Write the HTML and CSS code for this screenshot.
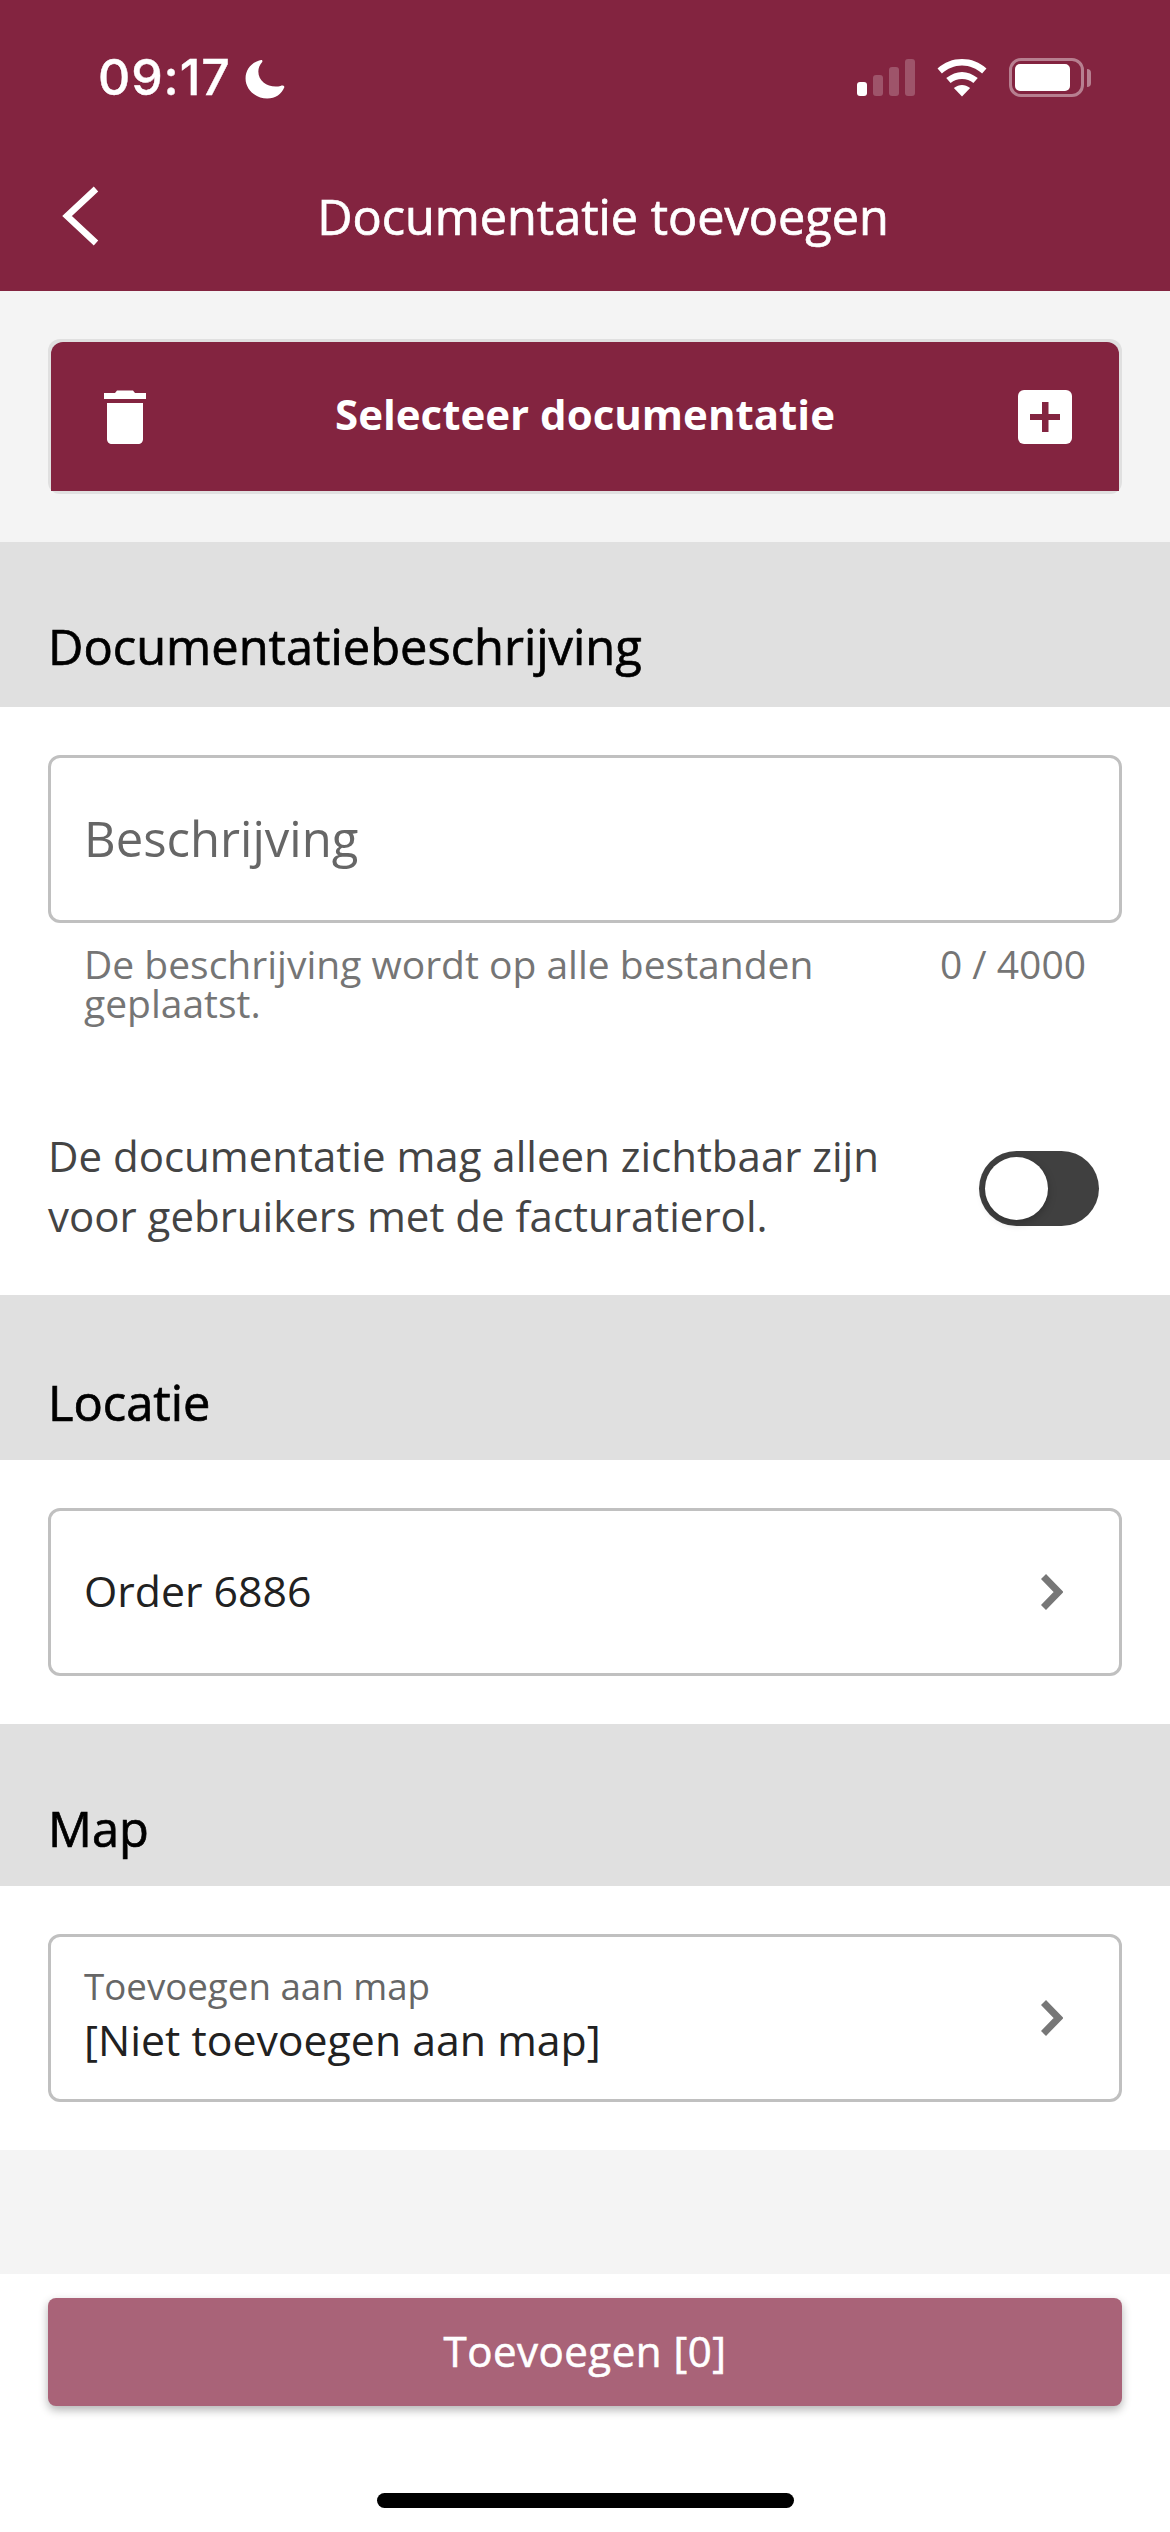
FILE: index.html
```html
<!DOCTYPE html>
<html lang="nl">
<head>
<meta charset="utf-8">
<title>Documentatie toevoegen</title>
<link rel="stylesheet" href="styles.css">
</head>
<body>
<div class="screen">
  <header class="appbar">
    <div class="status">
      <div class="status-left">
        <span class="clock">09:17</span>
        <svg class="moon" width="40" height="40" viewBox="0 0 36 40" preserveAspectRatio="none"><path fill="#fff" d="M14.500 1C6 3 0.500 10.500 0.500 19.500C0.500 30.500 9.500 39.500 20 39.500C27.500 39.500 33 35 35.500 28C34.800 26.500 33.500 26.300 32 27C22 29.500 12 23 12 12.500C12 8.800 13.200 6 15.500 3C16 1.800 15.500 0.900 14.500 1Z"/></svg>
      </div>
      <div class="status-right">
        <svg class="signal" width="58" height="38" viewBox="0 0 58 38">
          <rect x="0" y="23" width="10" height="14" rx="3" fill="#fff"/>
          <g fill="#fff" fill-opacity=".22">
            <rect x="16" y="16" width="10" height="21" rx="3"/>
            <rect x="32" y="8" width="10" height="29" rx="3"/>
            <rect x="48" y="0" width="10" height="37" rx="3"/>
          </g>
        </svg>
        <svg class="wifi" width="50" height="38" viewBox="0 0 46 38" preserveAspectRatio="none">
          <path fill="#fff" d="M23 0C14.500 0 6.800 3.300 0.500 9.500L4.500 14.500C9.500 9.500 16 6.500 23 6.500C30 6.500 36.500 9.500 41.500 14.500L45.500 9.500C39.200 3.300 31.500 0 23 0Z"/>
          <path fill="#fff" d="M23 13C18 13 13.500 15 8.500 19L12.500 24C15.500 21.500 19 20 23 20C27 20 30.500 21.500 33.500 24L37.500 19C32.500 15 28 13 23 13Z"/>
          <path fill="#fff" d="M23 26C20.500 26 18 27 15.500 29L23 37.500L30.500 29C28 27 25.500 26 23 26Z"/>
        </svg>
        <div class="battery"><div class="battery-shell"><div class="battery-fill"></div></div><div class="battery-nub"></div></div>
      </div>
    </div>
    <div class="nav">
      <svg class="back" width="37" height="60" viewBox="0 0 37 60"><path fill="none" stroke="#fff" stroke-width="6.500" d="M34 3L5 30L34 57"/></svg>
      <h1 class="nav-title">Documentatie toevoegen</h1>
    </div>
  </header>

  <section class="picker">
    <div class="picker-frame">
      <div class="picker-btn">
        <svg class="trash" width="42" height="54" viewBox="0 0 42 54">
          <path fill="#fff" d="M0 3H11L13 0.500H29L31 3H42V9H0Z"/>
          <path fill="#fff" d="M3 13H39V49C39 52 37 54 34 54H8C5 54 3 52 3 49Z"/>
        </svg>
        <span class="picker-text">Selecteer documentatie</span>
        <svg class="plus" width="54" height="54" viewBox="0 0 54 54">
          <rect width="54" height="54" rx="6" fill="#fff"/>
          <rect x="12" y="24" width="30" height="6" fill="#832440"/>
          <rect x="24" y="12" width="6.500" height="30" fill="#832440"/>
        </svg>
      </div>
    </div>
  </section>

  <h2 class="section-head">Documentatiebeschrijving</h2>
  <section class="panel panel-desc">
    <div class="field field-input"><span class="placeholder">Beschrijving</span></div>
    <div class="helper">
      <p class="helper-text">De beschrijving wordt op alle bestanden geplaatst.</p>
      <span class="helper-count">0 / 4000</span>
    </div>
    <div class="toggle-row">
      <p class="toggle-label">De documentatie mag alleen zichtbaar zijn voor gebruikers met de facturatierol.</p>
      <div class="toggle"><div class="toggle-knob"></div></div>
    </div>
  </section>

  <h2 class="section-head section-head-loc">Locatie</h2>
  <section class="panel">
    <div class="field field-select">
      <div class="select-body"><span class="select-value">Order 6886</span></div>
      <svg class="chev" width="22" height="36" viewBox="0 0 22 36"><path fill="none" stroke="#777" stroke-width="7" d="M2.500 2.500L17.500 18L2.500 33.500"/></svg>
    </div>
  </section>

  <h2 class="section-head section-head-map">Map</h2>
  <section class="panel">
    <div class="field field-select">
      <div class="select-body select-body-stack">
        <span class="select-label">Toevoegen aan map</span>
        <span class="select-value">[Niet toevoegen aan map]</span>
      </div>
      <svg class="chev" width="22" height="36" viewBox="0 0 22 36"><path fill="none" stroke="#777" stroke-width="7" d="M2.500 2.500L17.500 18L2.500 33.500"/></svg>
    </div>
  </section>

  <div class="spacer"></div>

  <footer class="footer">
    <button class="submit" type="button">Toevoegen [0]</button>
    <div class="home-bar"></div>
  </footer>
</div>
</body>
</html>
```

FILE: styles.css
```css
* { box-sizing: border-box; }
html, body { margin: 0; padding: 0; background: #fff; }
body { font-family: "Open Sans", "Noto Sans", sans-serif; }
p, h1, h2 { margin: 0; }

.screen { width: 1170px; height: 2532px; display: flex; flex-direction: column; overflow: hidden; background: #fff; }

/* App bar */
.appbar { height: 291px; background: #832440; color: #fff; display: flex; flex-direction: column; flex: none; }
.status { height: 130px; padding: 58px 79px 0 98px; display: flex; justify-content: space-between; align-items: flex-start; }
.status-left { display: flex; align-items: flex-start; gap: 14px; }
.clock { font-family: Inter, sans-serif; font-weight: 500; font-size: 50px; line-height: 42px; letter-spacing: .9px; margin-top: -2px; -webkit-text-stroke: .4px #fff; }
.moon { margin-top: 1px; }
.status-right { display: flex; align-items: flex-start; gap: 22px; margin-top: 1px; }
.battery { display: flex; align-items: center; gap: 3px; margin-top: -1px; }
.battery-shell { width: 75px; height: 39px; padding: 3px; border: 3px solid rgba(255,255,255,.42); border-radius: 12px; }
.battery-fill { width: 55px; height: 27px; background: #fff; border-radius: 5px; }
.battery-nub { width: 4px; height: 18px; background: rgba(255,255,255,.42); border-radius: 0 5px 5px 0; }

.nav { flex: 1; display: grid; grid-template-columns: 140px 1fr 104px; align-items: center; padding-top: 10px; }
.back { margin-left: 62px; }
.nav-title { grid-column: 2; text-align: center; font-size: 48.6px; font-weight: 500; line-height: 64px; white-space: nowrap; -webkit-text-stroke: .7px #fff; }

/* Picker */
.picker { height: 251px; flex: none; background: #f4f4f4; padding: 48px 48px 0; }
.picker-frame { height: 155px; background: #e0e0e0; border-radius: 12px; padding: 3px; }
.picker-btn { height: 149px; background: #832440; border-radius: 12px 12px 0 0; display: grid; grid-template-columns: 1fr auto 1fr; align-items: center; padding: 0 47px 0 47px; color: #fff; }
.picker-text { font-size: 42px; font-weight: 700; line-height: 56px; white-space: nowrap; margin-bottom: 6px; }
.trash { justify-self: start; margin-left: 6px; }
.plus { justify-self: end; }

/* Section heads */
.section-head { height: 165px; flex: none; background: #e0e0e0; color: #000; padding: 72px 48px 0; font-size: 48.8px; font-weight: 500; line-height: 64px; -webkit-text-stroke: .7px #000; }
.section-head-loc { padding-top: 75px; }
.section-head-map { height: 162px; }

/* Panels */
.panel { background: #fff; padding: 48px; flex: none; }
.panel-desc { padding-bottom: 0; height: 588px; }

.field { height: 168px; background: #fff; border: 3px solid #c0c0c0; border-radius: 12px; }
.field-input { padding: 49px 33px 0; }
.placeholder { display: block; font-size: 49px; line-height: 62px; color: #666; }

.helper { display: flex; justify-content: space-between; align-items: flex-start; padding: 21px 36px 0 36px; }
.helper-text { width: 780px; font-size: 39px; line-height: 39px; color: #757575; }
.helper-count { font-size: 39px; line-height: 39px; color: #757575; }

.toggle-row { display: flex; justify-content: space-between; align-items: center; width: 1051px; margin-top: 104px; }
.toggle-label { width: 900px; font-size: 42px; line-height: 60px; color: #444; }
.toggle { width: 120px; height: 75px; padding: 6px; background: #404040; border-radius: 38px; flex: none; margin-top: 5px; }
.toggle-knob { width: 63px; height: 63px; background: #fff; border-radius: 50%; box-shadow: 0 3px 8px rgba(0,0,0,.25); }

.field-select { display: flex; align-items: center; justify-content: space-between; padding: 0 56px 0 33px; }
.select-body { display: flex; flex-direction: column; padding-bottom: 3px; }
.select-body-stack { padding-bottom: 7px; }
.select-value { font-size: 42.8px; line-height: 56px; color: #212121; }
.select-label { font-size: 36.7px; line-height: 50.7px; color: #666; }

.spacer { flex: 1; background: #f4f4f4; }

/* Footer */
.footer { height: 258px; flex: none; background: #fff; padding: 24px 48px 0; display: flex; flex-direction: column; align-items: center; }
.submit { width: 1074px; height: 108px; border: 0; border-radius: 8px; background: #a96378; color: #fff; font-family: inherit; font-size: 42px; font-weight: 500; line-height: 56px; letter-spacing: .5px; padding: 0 0 2px; box-shadow: 0 4px 10px rgba(0,0,0,.3); -webkit-text-stroke: .6px #fff; }
.home-bar { width: 417px; height: 15px; background: #000; border-radius: 8px; margin-top: 87px; }
```
